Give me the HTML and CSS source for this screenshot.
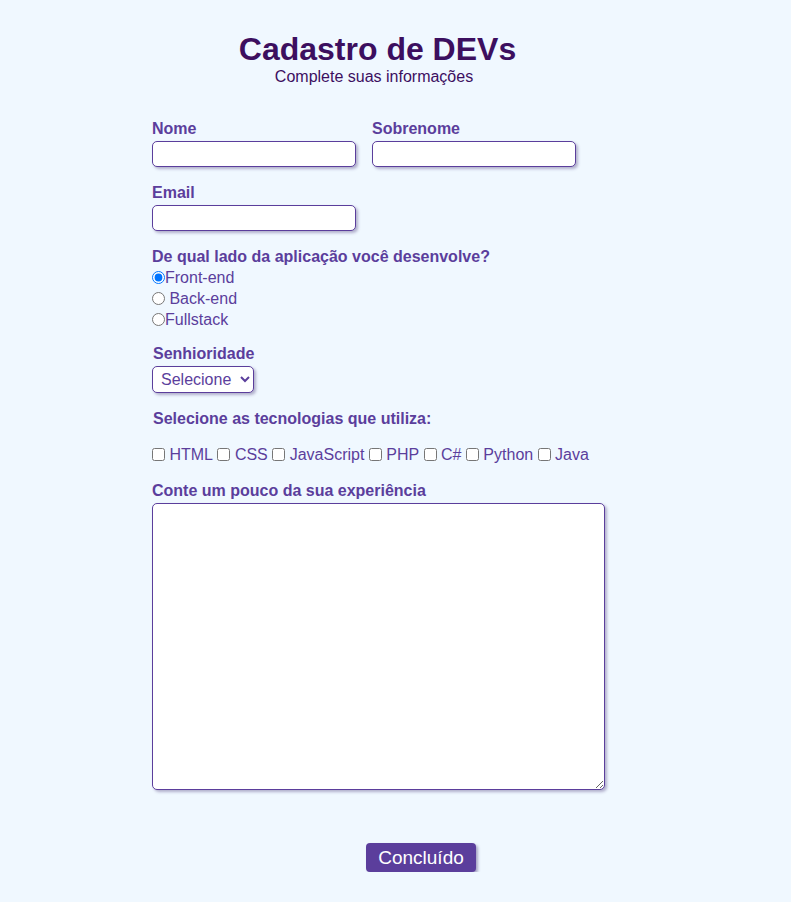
FILE: index.html
```html
<!DOCTYPE html>
<html lang="pt-BR">
<head>
<meta charset="utf-8">
<title>Cadastro de DEVs</title>
<link rel="stylesheet" href="styles.css">
</head>
<body>
<main class="page">
  <header class="head">
    <h1 class="title">Cadastro de DEVs</h1>
    <p class="subtitle">Complete suas informações</p>
  </header>
  <form class="form">
    <div class="row">
      <div class="field">
        <label class="label" for="nome">Nome</label>
        <input class="input" id="nome" type="text">
      </div>
      <div class="field">
        <label class="label" for="sobrenome">Sobrenome</label>
        <input class="input" id="sobrenome" type="text">
      </div>
    </div>
    <div class="field">
      <label class="label" for="email">Email</label>
      <input class="input" id="email" type="email">
    </div>
    <div class="group">
      <p class="label">De qual lado da aplicação você desenvolve?</p>
      <label class="opt"><input class="radio" type="radio" name="lado" checked>Front-end</label>
      <label class="opt"><input class="radio" type="radio" name="lado"> Back-end</label>
      <label class="opt"><input class="radio" type="radio" name="lado">Fullstack</label>
    </div>
    <div class="group group-sen indent">
      <label class="label" for="sen">Senhioridade</label>
      <select class="select" id="sen">
        <option>Selecione</option>
        <option>Júnior</option>
        <option>Pleno</option>
        <option>Sênior</option>
      </select>
    </div>
    <p class="label indent techs-title">Selecione as tecnologias que utiliza:</p>
    <div class="techs">
      <label class="opt"><input class="check" type="checkbox"> HTML</label>
      <label class="opt"><input class="check" type="checkbox"> CSS</label>
      <label class="opt"><input class="check" type="checkbox"> JavaScript</label>
      <label class="opt"><input class="check" type="checkbox"> PHP</label>
      <label class="opt"><input class="check" type="checkbox"> C#</label>
      <label class="opt"><input class="check" type="checkbox"> Python</label>
      <label class="opt"><input class="check" type="checkbox"> Java</label>
    </div>
    <div class="field">
      <label class="label" for="exp">Conte um pouco da sua experiência</label>
      <textarea class="textarea" id="exp"></textarea>
    </div>
    <div class="actions">
      <button class="button" type="submit">Concluído</button>
    </div>
  </form>
</main>
</body>
</html>
```
FILE: styles.css
```css
* {
  margin: 0;
  padding: 0;
  box-sizing: border-box;
}

body {
  background: #f0f8ff;
  font-family: "Liberation Sans", Arial, sans-serif;
  color: #5b3e9c;
  font-size: 16px;
}

.page {
  width: 453px;
  margin-left: 152px;
  padding-top: 31px;
}

.head {
  width: 451px;
  text-align: center;
  color: #3c0f5f;
}

.title {
  font-size: 32px;
  line-height: 37px;
  font-weight: bold;
}

.subtitle {
  font-size: 16px;
  line-height: 18px;
  padding-right: 7px;
}

.form {
  margin-top: 33px;
  display: flex;
  flex-direction: column;
}

.row {
  display: flex;
  gap: 16px;
}

.field {
  display: flex;
  flex-direction: column;
  align-items: flex-start;
  margin-bottom: 16px;
}

.label {
  display: block;
  font-weight: bold;
  font-size: 16px;
  line-height: 19px;
  color: #5b3e9c;
  margin-bottom: 3px;
}

.input {
  width: 204px;
  height: 26px;
  border: 1px solid #5b3e9c;
  border-radius: 5px;
  background: #fff;
  box-shadow: 2px 2px 3px rgba(60, 40, 110, 0.35);
  font: inherit;
}

.group {
  display: flex;
  flex-direction: column;
  align-items: flex-start;
  margin-bottom: 14px;
}

.group .label {
  margin-bottom: 1px;
}

.group-sen {
  margin-bottom: 16px;
}

.group-sen .label {
  margin-bottom: 0;
}

.opt {
  display: flex;
  align-items: center;
  font-size: 16px;
  line-height: 21px;
  white-space: pre;
}

.radio {
  width: 13px;
  height: 13px;
  margin: 0;
}

.indent {
  margin-left: 1px;
}

.select {
  margin-left: -1px;
  margin-top: 3px;
  height: 27px;
  width: 102px;
  padding: 0 4px 0 4px;
  border: 1px solid #5b3e9c;
  border-radius: 5px;
  background: #fff;
  color: #5b3e9c;
  font-family: inherit;
  font-size: 16px;
  box-shadow: 2px 2px 3px rgba(60, 40, 110, 0.35);
}

.techs-title {
  margin-bottom: 16px;
}

.techs {
  display: flex;
  gap: 4.45px;
  margin-bottom: 16px;
}

.check {
  width: 13px;
  height: 13px;
  margin: 0;
}

.textarea {
  width: 453px;
  height: 287px;
  border: 1px solid #5b3e9c;
  border-radius: 5px;
  background: #fff;
  box-shadow: 2px 2px 3px rgba(60, 40, 110, 0.35);
  resize: both;
}

.actions {
  padding-left: 214px;
  margin-top: 37px;
}

.button {
  width: 110px;
  height: 29px;
  background: #5b3e9c;
  color: #fff;
  border: none;
  border-radius: 4px;
  font-family: inherit;
  font-size: 19px;
  box-shadow: 2px 2px 3px rgba(60, 40, 110, 0.4);
}
```
